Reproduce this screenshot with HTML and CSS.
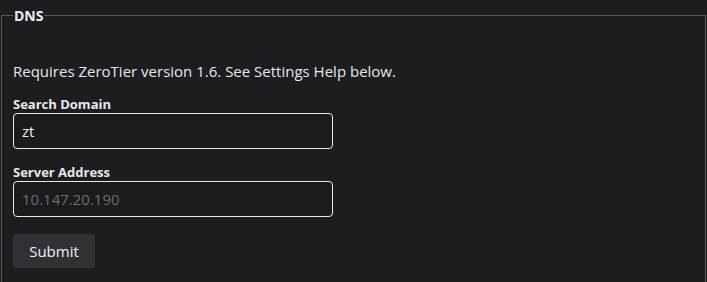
FILE: index.html
```html
<!DOCTYPE html>
<html lang="en">
<head>
  <meta charset="UTF-8">
  <title>DNS</title>
  <link rel="stylesheet" href="styles.css">
</head>
<body>
  <fieldset class="dns-box">
    <legend>DNS</legend>
    <p class="note">Requires ZeroTier version 1.6. See Settings Help below.</p>
    <form class="dns-form" onsubmit="return false">
      <label class="field">
        <span>Search Domain</span>
        <input type="text" value="zt">
      </label>
      <label class="field">
        <span>Server Address</span>
        <input type="text" placeholder="10.147.20.190">
      </label>
      <button type="submit" class="submit-btn">Submit</button>
    </form>
  </fieldset>
</body>
</html>
```

FILE: styles.css
```css
/* Основа */
body {
  margin: 0;
  background-color: #1c1d1f;
  color: #e8e8e8;
  font-family: 'Open Sans', 'Noto Sans', sans-serif;
}

/* Рамка DNS */
.dns-box {
  margin: 6px 1px 0 1px;
  padding: 0 11px 14px 11px;
  border: 1px solid #555759;
  border-bottom: none;
  min-height: 270px;
  box-sizing: border-box;
}

.dns-box legend {
  padding: 0 1px;
  font-size: 14px;
  font-weight: 700;
  color: #f0f0f0;
}

.note {
  margin: 36px 0 14px;
  font-size: 15px;
}

.dns-form {
  display: flex;
  flex-direction: column;
  align-items: flex-start;
}

.field {
  display: flex;
  flex-direction: column;
  margin-bottom: 14px;
}

.field span {
  font-size: 13px;
  font-weight: 700;
}

.field input {
  width: 320px;
  height: 36px;
  box-sizing: border-box;
  padding: 0 8px;
  background: #1a1b1d;
  border: 1px solid #e8e8e8;
  border-radius: 4px;
  color: #f0f0f0;
  font-family: inherit;
  font-size: 15px;
  outline: none;
}

.field input::placeholder {
  color: #6b6d70;
}

.submit-btn {
  margin-top: 3px;
  width: 82px;
  height: 34px;
  background-color: #2f3134;
  border: none;
  border-radius: 4px;
  color: #f0f0f0;
  font-family: inherit;
  font-size: 15px;
  cursor: pointer;
}
```
